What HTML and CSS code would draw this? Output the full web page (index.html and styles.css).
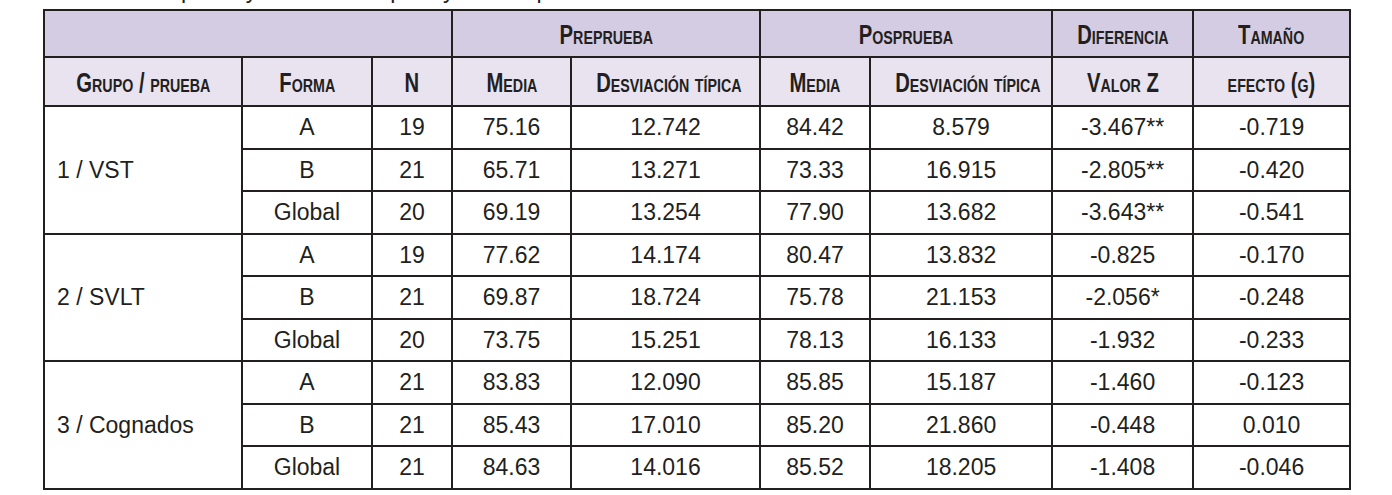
FILE: index.html
```html
<!DOCTYPE html>
<html lang="es">
<head>
<meta charset="utf-8">
<title>Tabla</title>
<link rel="stylesheet" href="styles.css">
</head>
<body>
<div class="caption">
  <div class="caption-line">
    <span class="c1">p</span><span class="c2">y</span><span class="c3">p</span><span class="c4">y</span><span class="c5">p</span>
  </div>
</div>
<table class="data">
  <colgroup>
    <col class="w1"><col class="w2"><col class="w3"><col class="w4"><col class="w5"><col class="w6"><col class="w7"><col class="w8"><col class="w9">
  </colgroup>
  <thead>
    <tr class="h1">
      <th colspan="3"></th>
      <th colspan="2"><span class="sc">Preprueba</span></th>
      <th colspan="2"><span class="sc">Posprueba</span></th>
      <th><span class="sc">Diferencia</span></th>
      <th><span class="sc">Tamaño</span></th>
    </tr>
    <tr class="h2">
      <th><span class="sc">Grupo / prueba</span></th>
      <th><span class="sc">Forma</span></th>
      <th><span class="sc">N</span></th>
      <th><span class="sc">Media</span></th>
      <th><span class="sc">Desviación típica</span></th>
      <th><span class="sc">Media</span></th>
      <th><span class="sc">Desviación típica</span></th>
      <th><span class="sc">Valor Z</span></th>
      <th><span class="sc">efecto (g)</span></th>
    </tr>
  </thead>
  <tbody>
    <tr class="r">
      <td rowspan="3" class="grp">1 / VST</td>
      <td>A</td><td>19</td><td>75.16</td><td>12.742</td><td>84.42</td><td>8.579</td><td>-3.467**</td><td>-0.719</td>
    </tr>
    <tr class="r">
      <td>B</td><td>21</td><td>65.71</td><td>13.271</td><td>73.33</td><td>16.915</td><td>-2.805**</td><td>-0.420</td>
    </tr>
    <tr class="r">
      <td>Global</td><td>20</td><td>69.19</td><td>13.254</td><td>77.90</td><td>13.682</td><td>-3.643**</td><td>-0.541</td>
    </tr>
    <tr class="r">
      <td rowspan="3" class="grp">2 / SVLT</td>
      <td>A</td><td>19</td><td>77.62</td><td>14.174</td><td>80.47</td><td>13.832</td><td>-0.825</td><td>-0.170</td>
    </tr>
    <tr class="r">
      <td>B</td><td>21</td><td>69.87</td><td>18.724</td><td>75.78</td><td>21.153</td><td>-2.056*</td><td>-0.248</td>
    </tr>
    <tr class="r">
      <td>Global</td><td>20</td><td>73.75</td><td>15.251</td><td>78.13</td><td>16.133</td><td>-1.932</td><td>-0.233</td>
    </tr>
    <tr class="r">
      <td rowspan="3" class="grp">3 / Cognados</td>
      <td>A</td><td>21</td><td>83.83</td><td>12.090</td><td>85.85</td><td>15.187</td><td>-1.460</td><td>-0.123</td>
    </tr>
    <tr class="r">
      <td>B</td><td>21</td><td>85.43</td><td>17.010</td><td>85.20</td><td>21.860</td><td>-0.448</td><td>0.010</td>
    </tr>
    <tr class="r">
      <td>Global</td><td>21</td><td>84.63</td><td>14.016</td><td>85.52</td><td>18.205</td><td>-1.408</td><td>-0.046</td>
    </tr>
  </tbody>
</table>
</body>
</html>
```

FILE: styles.css
```css
html, body {
  margin: 0;
  padding: 0;
  background: #ffffff;
}

body {
  color: #231f20;
  font-family: "Liberation Sans", Arial, sans-serif;
}

.caption {
  height: 9px;
  overflow: hidden;
}

.caption-line {
  display: flex;
  margin-top: -21px;
  font-size: 23px;
  line-height: 23px;
  color: #231f20;
}

.caption-line span { display: block; }
.c1 { margin-left: 181px; }
.c2 { margin-left: 52px; }
.c3 { margin-left: 133px; }
.c4 { margin-left: 40px; }
.c5 { margin-left: 82px; }

.data {
  margin-left: 43px;
  width: 1308px;
  table-layout: fixed;
  border-collapse: separate;
  border-spacing: 0;
  border-top: 2px solid #231f20;
  border-left: 2px solid #231f20;
}

.w1 { width: 198px; }
.w2 { width: 130px; }
.w3 { width: 80px; }
.w4 { width: 119px; }
.w5 { width: 189px; }
.w6 { width: 110px; }
.w7 { width: 182px; }
.w8 { width: 141px; }
.w9 { width: 157px; }

.data th,
.data td {
  border-right: 2px solid #231f20;
  border-bottom: 2px solid #231f20;
  padding: 0;
  text-align: center;
  vertical-align: middle;
}

.h1 { height: 47px; }
.h1 th { background: #d4cce3; }
.h2 { height: 49px; }
.h2 th { background: #e8e3ef; }

.data th {
  font-family: "Liberation Sans", Arial, sans-serif;
  font-weight: 700;
  font-size: 27px;
  font-variant: small-caps;
  line-height: 1;
  white-space: nowrap;
}

.sc {
  display: inline-block;
  transform: scaleX(0.75);
  transform-origin: center;
}

.h1 .sc { padding-top: 3px; }
.h2 .sc { padding-top: 4px; }

.r { height: 42.5px; }

.data td {
  font-size: 23px;
  line-height: 1;
  padding-top: 1px;
}

.data td.grp {
  text-align: left;
  padding-left: 12px;
}
```
